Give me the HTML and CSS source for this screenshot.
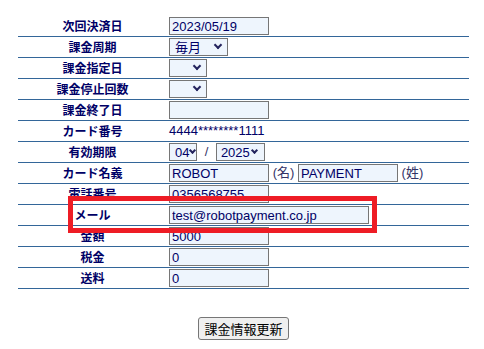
FILE: index.html
```html
<!DOCTYPE html>
<html>
<head>
    <title>課金情報</title>
    <link rel="stylesheet" href="styles.css">
</head>
<body>
    <div class="page">
        <table class="form">
            <tr>
                <th>次回決済日</th>
                <td><input type="text" class="field" value="2023/05/19"></td>
            </tr>
            <tr>
                <th>課金周期</th>
                <td><span class="sel"><select class="w-cycle"><option>毎月</option></select></span></td>
            </tr>
            <tr>
                <th>課金指定日</th>
                <td><span class="sel"><select class="w-empty"><option></option></select></span></td>
            </tr>
            <tr>
                <th>課金停止回数</th>
                <td><span class="sel"><select class="w-empty"><option></option></select></span></td>
            </tr>
            <tr>
                <th>課金終了日</th>
                <td><input type="text" class="field" value=""></td>
            </tr>
            <tr>
                <th>カード番号</th>
                <td><span class="plain">4444********1111</span></td>
            </tr>
            <tr>
                <th>有効期限</th>
                <td>
                    <span class="sel sel-month"><select class="w-month"><option>04</option></select></span>
                    <span class="slash">/</span>
                    <span class="sel sel-year"><select class="w-year"><option>2025</option></select></span>
                </td>
            </tr>
            <tr>
                <th>カード名義</th>
                <td>
                    <input type="text" class="field" value="ROBOT">
                    <span class="note">(名)</span>
                    <input type="text" class="field" value="PAYMENT">
                    <span class="note">(姓)</span>
                </td>
            </tr>
            <tr>
                <th>電話番号</th>
                <td><input type="text" class="field" value="0356568755"></td>
            </tr>
            <tr>
                <th>メール</th>
                <td><input type="text" class="field wide" value="test@robotpayment.co.jp"></td>
            </tr>
            <tr>
                <th>金額</th>
                <td><input type="text" class="field" value="5000"></td>
            </tr>
            <tr>
                <th>税金</th>
                <td><input type="text" class="field" value="0"></td>
            </tr>
            <tr>
                <th>送料</th>
                <td><input type="text" class="field" value="0"></td>
            </tr>
        </table>

        <div class="actions">
            <button class="button">課金情報更新</button>
        </div>
    </div>

    <div class="highlight"></div>
</body>
</html>
```

FILE: styles.css
```css
body {
    margin: 0;
    font-family: "Liberation Sans", "Noto Sans CJK JP", sans-serif;
    color: #000066;
}

.page {
    width: 451px;
    padding: 16px 0 0 18px;
}

.form {
    width: 451px;
    border-collapse: collapse;
}

.form tr {
    border-bottom: 1px solid #336699;
}

.form th,
.form td {
    height: 20px;
    padding: 0;
    line-height: 18px;
    vertical-align: middle;
}

.form th {
    width: 149px;
    font-family: "Noto Sans CJK JP", sans-serif;
    font-size: 12px;
    font-weight: bold;
    text-align: center;
    color: #000066;
}

.form td {
    padding-left: 2px;
    font-size: 13px;
    white-space: nowrap;
}

.field {
    box-sizing: border-box;
    width: 100px;
    height: 18px;
    margin: 0;
    padding: 0 2px;
    border: 1px solid #767676;
    background: #eef5fd;
    font-family: "Liberation Sans", "Noto Sans CJK JP", sans-serif;
    font-size: 13px;
    color: #000066;
    vertical-align: middle;
}

.field.wide {
    width: 200px;
}

.sel {
    position: relative;
    display: inline-block;
    vertical-align: middle;
    line-height: 0;
}

.sel select {
    box-sizing: border-box;
    height: 18px;
    margin: 0;
    padding: 0 0 0 5px;
    border: 1px solid #767676;
    border-radius: 0;
    background: #eef5fd;
    font-family: "Liberation Sans", "Noto Sans CJK JP", sans-serif;
    font-size: 13px;
    color: #000066;
    appearance: none;
    -webkit-appearance: none;
}

.sel::after {
    content: "";
    position: absolute;
    right: 7px;
    top: 4px;
    width: 4px;
    height: 4px;
    border-right: 2px solid #24245e;
    border-bottom: 2px solid #24245e;
    transform: rotate(45deg);
    pointer-events: none;
}

.sel-month::after {
    right: 2px;
    width: 3px;
    height: 3px;
    top: 5px;
}

.sel-year::after {
    right: 8px;
    width: 3px;
    height: 3px;
    top: 5px;
}

.w-cycle { width: 59px; }
.w-empty { width: 38px; }

.sel .w-month {
    width: 28px;
    padding-left: 5px;
}

.sel .w-year {
    width: 49px;
    padding-left: 4px;
}

.slash {
    display: inline-block;
    margin: 0 4px;
    color: #333366;
}

.note {
    color: #333366;
}

.plain {
    color: #000066;
}

.actions {
    padding-top: 28px;
    text-align: center;
}

.button {
    height: 23px;
    padding: 0 5px;
    font-family: "Noto Sans CJK JP", sans-serif;
    font-size: 13px;
    color: #000;
    background-color: #efefef;
    border: 1px solid #767676;
    border-radius: 3px;
}

.highlight {
    position: absolute;
    left: 68px;
    top: 196px;
    width: 299px;
    height: 27px;
    border: 5px solid #ee1c25;
}
```
